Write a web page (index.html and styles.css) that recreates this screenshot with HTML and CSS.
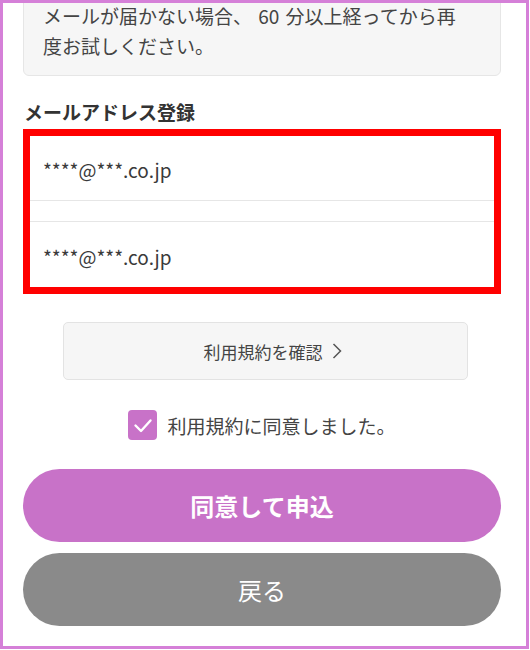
FILE: index.html
```html
<!DOCTYPE html>
<html lang="ja">
<head>
<meta charset="utf-8">
<title>メールアドレス登録</title>
<link rel="stylesheet" href="styles.css">
</head>
<body>
<div class="frame">
  <div class="notice">メールが届かない場合、 60 分以上経ってから再<br>度お試しください。</div>
  <h2 class="heading">メールアドレス登録</h2>
  <div class="emails">
    <div class="field field-first">****@***.co.jp</div>
    <div class="spacer"></div>
    <div class="field field-second">****@***.co.jp</div>
  </div>
  <div class="terms">
    <span>利用規約を確認</span>
    <svg class="chev" width="10" height="16" viewBox="0 0 10 16"><polyline points="1.5,1 8.5,8 1.5,15" fill="none" stroke="#555" stroke-width="1.5"/></svg>
  </div>
  <div class="agree">
    <span class="check"><svg width="29" height="30" viewBox="0 0 29 30"><polyline points="7.5,15.5 13,21 22.5,10.5" fill="none" stroke="#fff" stroke-width="2.4" stroke-linecap="round" stroke-linejoin="round"/></svg></span>
    <span class="agree-label">利用規約に同意しました。</span>
  </div>
  <div class="btn btn-primary">同意して申込</div>
  <div class="btn btn-back">戻る</div>
</div>
</body>
</html>
```

FILE: styles.css
```css
html, body {
  margin: 0;
  padding: 0;
  background: #fff;
}
body {
  font-family: "Noto Sans CJK JP", "Noto Sans", sans-serif;
}
.frame {
  width: 529px;
  height: 649px;
  box-sizing: border-box;
  border: 3px solid #d580d8;
  overflow: hidden;
  padding: 0 25px 0 20px;
}
.notice {
  margin-top: -19px;
  background: #f6f6f6;
  border: 1px solid #e6e6e6;
  border-radius: 6px;
  padding: 16px 10px 14px 19px;
  font-size: 19px;
  line-height: 30px;
  word-spacing: 2px;
  color: #444;
  white-space: nowrap;
}
.heading {
  margin: 22px 0 0 0;
  padding-left: 1px;
  font-size: 19px;
  line-height: 28px;
  font-weight: 700;
  color: #333;
}
.emails {
  margin-top: 3px;
  border: 7px solid #ff0000;
  background: #fff;
}
.field {
  display: flex;
  align-items: center;
  padding: 3px 0 0 13px;
  font-size: 19px;
  color: #3a3a3a;
  box-sizing: border-box;
}
.field-first {
  height: 65px;
  border-bottom: 1px solid #e6e6e6;
}
.spacer {
  height: 20px;
}
.field-second {
  height: 66px;
  border-top: 1px solid #e6e6e6;
}
.terms {
  margin: 28px 33px 0 40px;
  height: 58px;
  box-sizing: border-box;
  padding-left: 14px;
  background: #f6f6f6;
  border: 1px solid #e3e3e3;
  border-radius: 5px;
  display: flex;
  align-items: center;
  justify-content: center;
  gap: 9px;
  font-size: 17px;
  color: #444;
}
.chev {
  display: block;
}
.agree {
  margin-top: 30px;
  height: 30px;
  display: flex;
  align-items: center;
  justify-content: center;
  gap: 10px;
}
.check {
  width: 29px;
  height: 30px;
  background: #c872c8;
  border-radius: 4px;
  display: block;
}
.check svg {
  display: block;
}
.agree-label {
  font-size: 19px;
  color: #444;
}
.btn {
  height: 73px;
  border-radius: 37px;
  display: flex;
  align-items: center;
  justify-content: center;
  color: #fff;
  font-size: 24px;
}
.btn-primary {
  margin-top: 29px;
  background: #c872c8;
  font-weight: 700;
}
.btn-back {
  margin-top: 11px;
  background: #8a8a8a;
  font-weight: 400;
}
```
